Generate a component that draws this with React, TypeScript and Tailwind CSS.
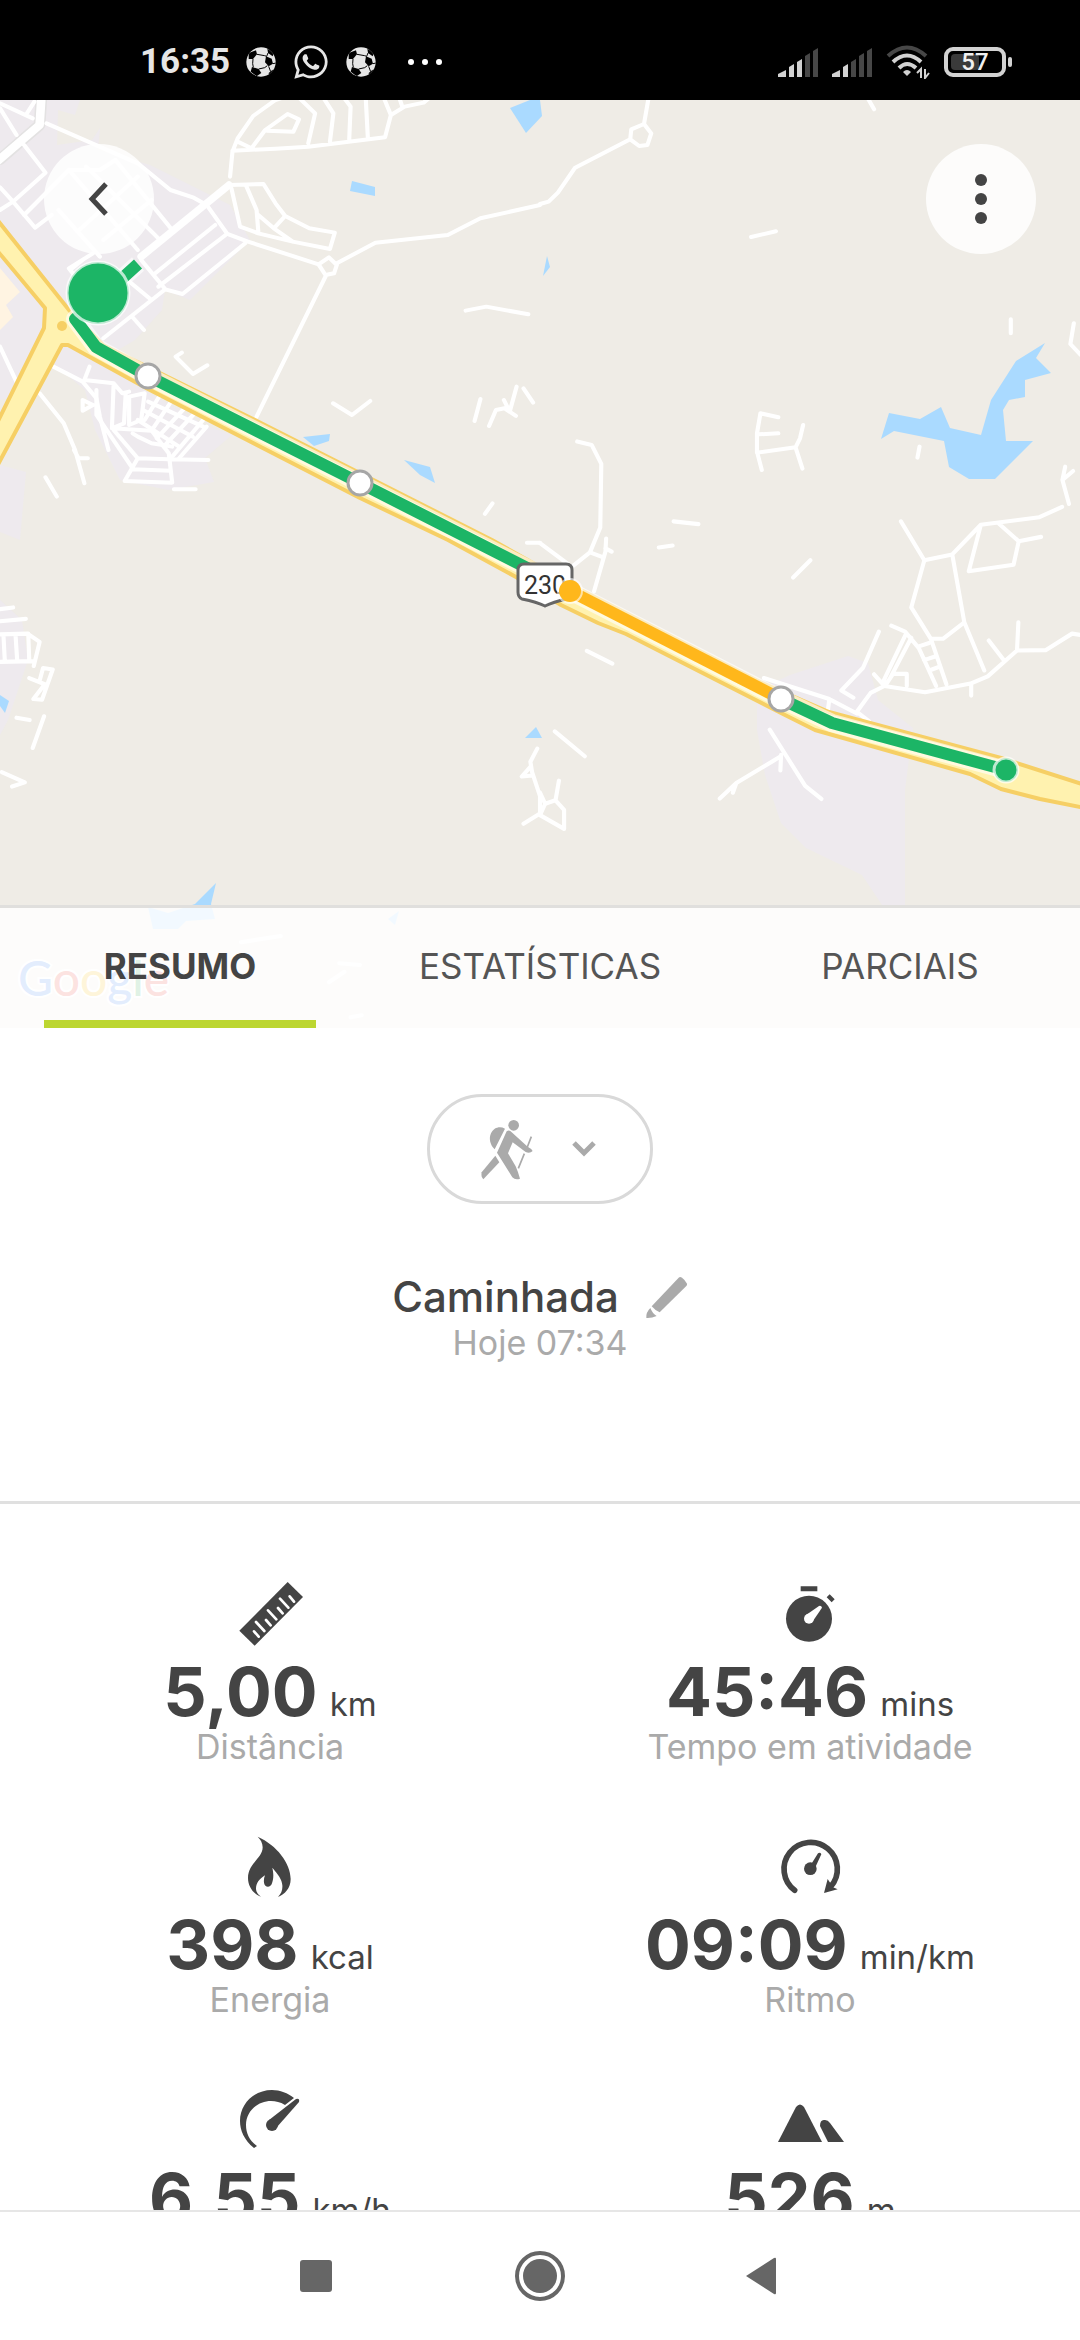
import { useState } from "react";
import type { ReactNode } from "react";
import { FaWhatsapp } from "react-icons/fa";

const SoccerBall = () => (
  <svg viewBox="0 0 90 90" className="size-[30px]" aria-hidden="true">
    <clipPath id="ball">
      <circle cx="45" cy="45" r="44" />
    </clipPath>
    <g clipPath="url(#ball)">
      <rect width="90" height="90" fill="#e6e6e6" />
      <g fill="#000">
        <path d="M8 18 L30 10 L33 22 L21 36 L8 36Z" />
        <path d="M60 28 L77 35 L81 50 L68 58 L57 46Z" />
        <path d="M18 60 L38 66 L46 78 L32 88 L14 74Z" />
        <path d="M64 4 L84 18 L80 28 L66 18Z" />
        <path d="M68 78 L80 68 L84 78 L70 90Z" />
      </g>
      <path
        d="M33 22 L56 26 L62 28 L66 18 M21 36 L20 50 L22 61 M38 66 L56 62 L64 56 M81 50 L90 48 M68 58 L74 74"
        stroke="#000"
        strokeWidth="3"
        fill="none"
      />
    </g>
  </svg>
);

const SignalBars = ({ level }: { level: number }) => {
  const bars = [
    "M0 29 V26 L8 22 V29Z",
    "M11 29 V19 L16 16 V29Z",
    "M19 29 V14 L24 11 V29Z",
    "M27 29 V8 L32 5 V29Z",
    "M35 29 V3 L40 0 V29Z",
  ];

  return (
    <svg viewBox="0 0 40 29" className="h-[29px] w-10" aria-hidden="true">
      {bars.map((d, i) => (
        <path key={d} d={d} fill={i < level ? "#d2d2d2" : "#474747"} />
      ))}
    </svg>
  );
};

const StatusBar = () => (
  <header className="flex h-[100px] shrink-0 items-end justify-between bg-black pr-[68px] pb-[18px] pl-[140px]">
    <div className="flex h-10 items-center gap-4 text-[#e6e6e6]">
      <span className="font-[Roboto] text-[35px] font-bold leading-10">16:35</span>
      <SoccerBall />
      <FaWhatsapp size={38} />
      <SoccerBall />
      <svg viewBox="0 0 34 6" className="ml-4 h-[6px] w-[34px]" aria-hidden="true" fill="#fff">
        <circle cx="3" cy="3" r="3" />
        <circle cx="17" cy="3" r="3" />
        <circle cx="31" cy="3" r="3" />
      </svg>
    </div>

    <div className="flex h-10 items-center gap-[14px]">
      <SignalBars level={3} />
      <SignalBars level={2} />
      <svg viewBox="0 0 44 34" className="h-[34px] w-11" aria-hidden="true" fill="none" strokeWidth="4">
        <path d="M2 11 Q21 -6 40 11" stroke="#474747" />
        <path d="M7 17 Q21 4 35 17" stroke="#d2d2d2" />
        <path d="M13 23 Q21 15 30 23" stroke="#d2d2d2" />
        <path d="M17 27 Q21 23 25 27 L21 31Z" fill="#d2d2d2" />
        <path d="M35 33 V24 L31 28 M39 24 V33 L43 28" stroke="#d2d2d2" strokeWidth="2" />
      </svg>
      <div className="flex items-center gap-[2px]">
        <div className="relative flex h-[30px] w-[62px] items-center justify-center rounded-[9px] border-4 border-[#d2d2d2]">
          <span className="absolute inset-y-[3px] left-[3px] w-7 rounded-sm bg-[#3a3a3a]" />
          <span className="relative font-[Roboto] text-[24px] font-medium leading-6 text-[#f0f0f0]">57</span>
        </div>
        <span className="h-[10px] w-1 rounded-sm bg-[#d2d2d2]" />
      </div>
    </div>
  </header>
);

const RouteMap = () => (
  <svg viewBox="0 100 1080 928" className="block w-full" role="img" aria-label="Mapa do percurso">
    <rect y="100" width="1080" height="928" fill="#efece6" />

    {/* urban areas */}
    <g fill="#eeeaee">
      <path d="M0 100 H80 L75 115 L58 110 L57 145 L92 140 L100 128 L98 150 L150 165 L230 205 L250 240 L190 300 L165 290 L162 310 L135 340 L118 350 L110 370 L205 425 L232 435 L205 458 L214 482 L168 490 L120 480 L95 430 L85 390 L55 365 L20 395 L0 400Z" />
      <path d="M0 465 L26 472 L20 540 L0 532Z" />
      <path d="M0 600 L22 620 L28 660 L8 720 L0 735Z" />
      <path d="M757 690 L790 675 L848 656 L868 663 L878 700 L913 728 L905 790 V905 H882 L862 875 L806 848 L781 823 L765 775 L757 730Z" />
    </g>
    <path d="M0 268 L20 292 L6 305 L13 317 L0 330Z" fill="#fff4e2" />

    {/* lakes */}
    <g fill="#aadaff">
      <path d="M510 108 L530 100 H540 L542 116 L526 133Z" />
      <path d="M352 181 L375 187 V196 L350 191Z" />
      <path d="M547 256 L550 267 L543 276Z" />
      <path d="M303 437 L330 434 L329 441 L314 446Z" />
      <path d="M404 460 L430 467 L435 483 L420 475Z" />
      <path d="M1045 343 L1036 358 L1051 373 L1025 380 V397 L1009 400 L1003 410 L1006 441 H1033 L995 479 H969 L949 467 L944 441 L894 431 L881 439 L889 413 L920 419 L941 407 L950 428 L981 435 L991 400 L1016 361Z" />
      <path d="M0 695 L9 701 L5 713 L0 706Z" />
      <path d="M525 738 L536 727 L542 738Z" />
      <path d="M148 907 L168 913 L195 904 L216 883 L211 904 L215 919 L186 921 L178 929 H153Z" />
      <path d="M388 919 L399 911 L395 925Z" />
    </g>

    {/* local streets, north-west */}
    <g
      transform="translate(0 100) scale(0.3444 0.3333)"
      fill="none"
      stroke="#fff"
      strokeWidth="12"
      strokeLinecap="round"
      strokeLinejoin="round"
    >
      <path d="M120 -5 L115 75 L0 178" strokeWidth="34" stroke="#e3e2e2" />
      <path d="M120 -5 L115 75 L-10 186" strokeWidth="25" />
      <path d="M0 10 L95 55 M75 45 L100 5 M0 25 L48 105 M135 70 L400 190 L495 270 L560 292 L600 315 L660 402 L720 425 L925 493" />
      <path d="M70 135 L132 218 L38 305 M0 330 L38 305 M0 262 L38 305 L102 383 L150 345 M70 345 L200 210 L290 210 L335 180" />
      <path d="M335 180 L500 390 M200 210 L400 450 M250 200 L460 415 M170 330 L290 470 M225 395 L400 230 M300 420 L440 300" />
      <path d="M410 470 L665 255" strokeWidth="22" />
      <path d="M665 255 L765 252 L800 310 L828 348 L898 385 L972 398 L958 447 L850 425 L750 400 L697 380 L672 265 M715 258 L745 330 L750 395 M828 348 L795 385 M750 345 L795 385 L850 425" />
      <path d="M410 480 L480 568 L530 582 L712 430 M480 568 L300 715 M448 522 L625 375 M460 560 L655 405 M370 540 L440 600 M385 652 L418 690 M270 460 L200 505 L215 525 M240 480 L210 505" />
      <path d="M668 230 L675 155 L690 115 L735 48 L800 0 L815 -5 M675 152 L800 146 L895 140 L1118 112 L1135 45 L1175 20 L1230 8 L1245 -5 M690 125 L730 145 L770 90 L835 42 L868 58 L852 95 L775 92 M870 -5 L915 40 L895 130 M940 -5 L968 40 L958 125 M1000 -5 L1018 20 L1014 118 M1062 -5 L1068 112 M1115 -5 L1135 45 M1160 -5 L1168 20" />
      <path d="M925 493 L955 472 L978 495 L970 520 L945 525 L925 493 M978 490 L1090 428 L1300 405 L1395 355 L1568 315 M945 530 L745 950" />
      <path d="M1352 632 L1412 620 L1534 643 M528 758 L510 770 L560 822 L602 796 M967 910 L1022 945 L1075 903 M1395 897 L1378 963 M1420 978 L1440 930 L1465 925 L1498 948 M1463 900 L1480 935 L1500 860 M1520 865 L1548 908" />
      <path d="M1430 1210 L1408 1242 M132 1132 L165 1190 M0 740 L50 850 L115 880 L185 970 L218 1050 L245 1150 M215 1050 L228 1075 L255 1075 M155 800 L240 845 L280 895 L290 950 L315 1050" />
      <path d="M260 800 L245 840 L330 850 L355 880 L375 875 M240 900 L240 932 L270 915Z M280 870 L280 945 L385 1105 M330 850 L325 985 L440 992 L490 1060 L500 1148 L362 1143 L400 1075 L490 1078 M325 985 L360 970 L365 880 M375 975 L375 890 L420 880 L410 960 L375 975 M330 990 L400 1075 M385 1108 L495 1112 M505 1168 H568 M490 1078 L605 1080" />
      <path d="M440 992 L500 900 M420 960 L465 885 M455 1015 L540 920 M475 1040 L565 940 M500 1070 L590 960 M520 1075 L600 980 M430 905 L590 980 M415 930 L560 1010 M400 960 L520 1040 M385 1000 L400 1010 L440 1030 L500 1040" />
    </g>

    {/* local streets, north-east */}
    <g
      transform="translate(540 100) scale(0.3444 0.3333)"
      fill="none"
      stroke="#fff"
      strokeWidth="12"
      strokeLinecap="round"
      strokeLinejoin="round"
    >
      <path d="M315 -5 L302 72 L323 100 L312 135 L288 138 L262 118 L265 88 L302 72 M262 118 L102 203 L52 278 L25 305 L0 312 M952 -5 L970 28" />
      <path d="M613 411 L685 394 M1367 658 V700 M1550 670 L1540 732 L1570 765 M1102 1040 L1096 1073" />
      <path d="M692 952 L640 940 L630 1000 L630 1055 L644 1110 M635 1003 L692 1000 M630 1058 L742 1042 L762 1106 M742 1042 L755 1015 L764 975" />
      <path d="M1525 1100 L1517 1140 L1536 1212 M1517 1140 L1548 1113" />
    </g>

    {/* local streets, south */}
    <g
      transform="translate(540 500) scale(0.3444)"
      fill="none"
      stroke="#fff"
      strokeWidth="12"
      strokeLinecap="round"
      strokeLinejoin="round"
    >
      <path d="M108 -170 L150 -160 L178 -105 L175 80 L145 152 L95 192 M145 152 L180 165 M192 112 L190 150 L157 265 M190 140 L208 150 M0 125 L80 185 M388 62 L460 70 M345 138 L385 132 M785 175 L735 225 M136 438 L210 475 M43 672 L130 744" />
      <path d="M1048 62 L1116 175 L1197 158 L1280 72 L1450 50 L1516 20 M1116 175 L1078 312 L1135 403 L1170 403 L1232 355 L1197 158 M1280 72 L1245 207 L1375 188 L1390 120 L1332 68 M1390 120 L1455 107 M1232 355 L1290 495" />
      <path d="M1020 365 L1060 382 L1100 430 L1150 540 M1135 403 L1180 535 M1100 425 L1130 415 M1115 465 L1145 455 M1130 495 L1158 485 M1062 390 L995 530 M1078 400 L1015 520 M970 506 L1000 540 L1118 558 L1250 533 L1300 512 L1385 437 L1468 436 L1545 388 L1570 392 M1385 437 L1389 355 M1347 465 L1303 408 M1252 533 V568 M1005 535 L1025 505 H1065 V540" />
      <path d="M984 382 L938 487 L875 553 L910 574 M1000 540 L960 560 L920 615 L955 642 M650 517 L840 578 L920 620 M840 578 L835 620 M667 667 L770 830 L817 868 M700 740 L698 785 M698 745 L570 822 L522 867 M570 822 L560 850" />
      <path d="M20 218 L-12 245 M0 850 L15 882 L45 872 L70 900 V955 L0 915 L15 882 M45 872 L55 815" />
    </g>
    <g
      transform="translate(0 500) scale(0.3444)"
      fill="none"
      stroke="#fff"
      strokeWidth="12"
      strokeLinecap="round"
      strokeLinejoin="round"
    >
      <path d="M1530 124 H1568 M1560 722 L1540 760 L1545 790 L1568 860 L1568 910 L1520 940 M1540 775 L1515 803 L1545 800" />
      <path d="M0 317 L38 312 M0 352 L75 345 M0 390 L80 388 L115 412 L98 482 M0 470 L100 468 M10 392 L14 468 M45 390 L50 468 M82 388 L85 468 M85 517 L130 535 L97 578 L122 580 L153 492 L125 488 L115 525 M48 632 L86 639 M128 628 L95 720 M5 790 L72 820 L35 832" />
      <path d="M700 1284 L815 1266 M985 1345 L1045 1350 M1000 1370 L955 1400 M1018 1502 L1050 1496" />
    </g>

    {/* highway */}
    <path
      d="M-5 217 L69 310 L103 345 L255 420 L492 540 L581 590 L760 682 L829 712 L1001 758 L1085 785 V808 L1040 799 L1001 789 L970 774 L815 730 L781 713 L626 634 L598 623 L561 605 L516 577 L448 540 L360 498 L148 389 L68 345 L62 345 L-5 470 V427 L44 328 L45 308 L-5 248Z"
      fill="#fff2af"
      stroke="#f6cf65"
      strokeWidth="4"
      strokeLinejoin="round"
    />
    <circle cx="62" cy="326" r="5" fill="#f6cf65" />

    {/* recorded route */}
    <g fill="none" strokeLinejoin="round">
      <path d="M138 264 L116 284 L75 319 L96 347 L148 376 L360 483 L545 577" stroke="#fff" strokeOpacity="0.6" strokeWidth="18" />
      <path d="M570 591 L781 699 L832 723 L1006 770" stroke="#fff" strokeOpacity="0.6" strokeWidth="18" />
      <path d="M138 264 L116 284 L75 319 L96 347 L148 376 L360 483 L545 577" stroke="#1cb566" strokeWidth="12" />
      <path d="M781 699 L832 723 L1006 770" stroke="#1cb566" strokeWidth="12" />
      <path d="M570 591 L781 699" stroke="#ffb71b" strokeWidth="12" />
    </g>
    <circle cx="98" cy="293" r="31" fill="#1cb566" stroke="#fff" strokeOpacity="0.7" strokeWidth="3" />

    <path
      d="M524 564 H566 Q572 564 572 570 V592 Q572 597 567 599 Q553 602 545 606 Q537 602 522 599 Q518 597 518 592 V570 Q518 564 524 564Z"
      fill="#fff"
      stroke="#666"
      strokeWidth="3"
    />
    <text x="545" y="594" textAnchor="middle" className="font-[Roboto] text-[25px]" fill="#333">
      230
    </text>

    <circle cx="570" cy="591" r="13" fill="#fff" fillOpacity="0.6" />
    <circle cx="570" cy="591" r="11" fill="#ffb71b" />
    <circle cx="1006" cy="770" r="12" fill="#1cb566" stroke="#fff" strokeOpacity="0.7" strokeWidth="3" />
    <g fill="#fff" stroke="#a6a6a6" strokeWidth="3">
      <circle cx="148" cy="376" r="12" />
      <circle cx="360" cy="483" r="12" />
      <circle cx="781" cy="699" r="12" />
    </g>

    <text
      x="18"
      y="996"
      className="font-[Lato] text-[48px] font-medium"
      stroke="#fff"
      strokeWidth="4"
      paintOrder="stroke"
    >
      <tspan fill="#4285f4">G</tspan>
      <tspan fill="#ea4335">o</tspan>
      <tspan fill="#fbbc05">o</tspan>
      <tspan fill="#4285f4">g</tspan>
      <tspan fill="#34a853">l</tspan>
      <tspan fill="#ea4335">e</tspan>
    </text>
  </svg>
);

const tabs = ["RESUMO", "ESTATÍSTICAS", "PARCIAIS"];

const Tabs = () => {
  const [active, setActive] = useState("RESUMO");

  return (
    <div
      role="tablist"
      className="absolute inset-x-0 bottom-0 grid grid-cols-3 border-t-[3px] border-[#e0dfdd] bg-white/85"
    >
      {tabs.map((tab) => (
        <button
          key={tab}
          role="tab"
          aria-selected={active === tab}
          onClick={() => setActive(tab)}
          className={
            active === tab
              ? "px-11 text-[35px] font-bold leading-10 text-[#444]"
              : "px-11 text-[35px] leading-10 text-[#555]"
          }
        >
          <span className="block pt-[38px] pb-[34px]">{tab}</span>
          <span className={active === tab ? "block h-2 bg-[#bcd631]" : "block h-2"} />
        </button>
      ))}
    </div>
  );
};

type StatProps = {
  icon: ReactNode;
  value: string;
  unit: string;
  label: string;
};

const Stat = ({ icon, value, unit, label }: StatProps) => (
  <div className="flex flex-col items-center">
    {icon}
    <p className="mt-[5px] flex items-baseline gap-3 whitespace-nowrap text-[#444]">
      <span className="text-[68px] font-bold leading-[72px]">{value}</span>
      <span className="text-[33px] leading-10">{unit}</span>
    </p>
    <p className="text-[34px] leading-10 text-[#aaa]">{label}</p>
  </div>
);

const stats: StatProps[] = [
  {
    value: "5,00",
    unit: "km",
    label: "Distância",
    icon: (
      <svg viewBox="342 54 216 216" className="size-[72px]" aria-hidden="true">
        <path d="M503 66 L549 111 L404 257 L358 212Z" fill="#444" />
        <path
          d="M402 214 L416 230 M408 186 L433 213 M438 180 L452 196 M444 151 L469 178 M474 144 L488 160 M480 116 L505 143 M509 109 L522 125"
          stroke="#fff"
          strokeWidth="8"
          strokeLinecap="round"
        />
      </svg>
    ),
  },
  {
    value: "45:46",
    unit: "mins",
    label: "Tempo em atividade",
    icon: (
      <svg viewBox="522 54 216 216" className="size-[72px]" aria-hidden="true">
        <circle cx="627" cy="176" r="69" fill="#444" />
        <path d="M602 79 H652 V94 H602Z M689 103 L704 118 L695 127 L680 112Z" fill="#444" />
        <circle cx="627" cy="176" r="15" fill="#fff" />
        <path d="M617 166 L657 138 Q664 136 666 143 L641 180Z" fill="#fff" />
      </svg>
    ),
  },
  {
    value: "398",
    unit: "kcal",
    label: "Energia",
    icon: (
      <svg viewBox="342 63 216 216" className="size-[72px]" aria-hidden="true">
        <path
          d="M413 80 C470 105 512 160 512 207 C512 235 495 252 474 261 C484 250 488 240 487 226 C486 208 474 193 457 173 C462 195 460 208 456 220 C452 234 434 234 432 218 C431 210 432 203 435 196 C417 207 408 220 408 235 C408 248 416 255 424 261 C400 252 384 230 384 204 C384 160 428 145 428 112 C428 98 421 88 413 80Z"
          fill="#444"
        />
      </svg>
    ),
  },
  {
    value: "09:09",
    unit: "min/km",
    label: "Ritmo",
    icon: (
      <svg viewBox="522 63 216 216" className="size-[72px]" aria-hidden="true">
        <path
          d="M584 241 A80 80 0 1 1 692 230"
          fill="none"
          stroke="#444"
          strokeWidth="17"
          strokeLinecap="round"
        />
        <path d="M683 207 L672 249 L713 238 L699 232Z" fill="#444" />
        <circle cx="631" cy="176" r="19" fill="#444" />
        <path d="M632 165 L654 130 Q661 126 664 133 L646 172Z" fill="#444" />
      </svg>
    ),
  },
  {
    value: "6,55",
    unit: "km/h",
    label: "Velocidade média",
    icon: (
      <svg viewBox="0 0 72 72" className="size-[72px]" aria-hidden="true" fill="#444">
        <path d="M20 64 C10 56 6 46 6 37 C6 20 20 6 38 6 C46 6 54 9 60 14 L51 21 C46 18 42 17 37 17 C24 17 12 27 12 41 C12 50 16 57 23 62Z" />
        <path d="M35 36 L62 15 Q66 14 65 18 L43 43Z" />
        <circle cx="38" cy="41" r="6" />
      </svg>
    ),
  },
  {
    value: "526",
    unit: "m",
    label: "Altitude máxima",
    icon: (
      <svg viewBox="0 0 72 72" className="size-[72px]" aria-hidden="true" fill="#444">
        <path d="M4 58 L22 23 Q26 18 30 23 L48 58Z" />
        <path d="M54 58 L46 42 Q46 35 51 36 Q54 36 56 39 L70 58Z" />
      </svg>
    ),
  },
];

const NavBar = () => (
  <nav className="grid h-[130px] shrink-0 grid-cols-[2fr_1fr_2fr] items-center border-t-2 border-[#e6e6e6] bg-white text-[#666]">
    <button aria-label="Recentes" className="justify-self-end pr-[100px]">
      <span className="block size-8 rounded-[3px] bg-[#666]" />
    </button>
    <button aria-label="Início" className="justify-self-center">
      <svg viewBox="0 0 50 50" className="size-[50px]">
        <circle cx="25" cy="25" r="23" fill="none" stroke="#666" strokeWidth="4" />
        <circle cx="25" cy="25" r="17" fill="#666" />
      </svg>
    </button>
    <button aria-label="Voltar" className="justify-self-start pl-[97px]">
      <svg viewBox="0 0 32 38" className="h-[38px] w-8">
        <path d="M1 19 L29 1 Q31 0 31 2 V36 Q31 38 29 37Z" fill="#666" />
      </svg>
    </button>
  </nav>
);

export default function App() {
  return (
    <div className="flex h-screen flex-col bg-white font-[Inter,sans-serif]">
      <StatusBar />

      <main className="min-h-0 flex-1 overflow-hidden">
        <section className="relative">
          <RouteMap />
          <div className="absolute inset-x-11 top-11 flex justify-between">
            <button
              aria-label="Voltar"
              className="flex size-[110px] items-center justify-center rounded-full bg-white/85"
            >
              <svg viewBox="0 0 24 36" className="h-9 w-6" fill="none" stroke="#444" strokeWidth="5">
                <path d="M19 3 L5 18 L19 33" />
              </svg>
            </button>
            <button
              aria-label="Mais opções"
              className="flex size-[110px] items-center justify-center rounded-full bg-white/85"
            >
              <svg viewBox="0 0 12 50" className="h-[50px] w-3" fill="#444">
                <circle cx="6" cy="6" r="6" />
                <circle cx="6" cy="25" r="6" />
                <circle cx="6" cy="44" r="6" />
              </svg>
            </button>
          </div>
          <Tabs />
        </section>

        <section className="flex flex-col items-center border-b-[3px] border-[#e0e0e0] pt-[66px] pb-[137px]">
          <button
            aria-label="Tipo de atividade"
            className="flex h-[110px] items-center gap-[38px] rounded-full border-[3px] border-[#d9d9d9] pr-[54px] pl-[50px]"
          >
            <svg viewBox="360 171 162 189" className="h-[63px] w-[54px]" fill="#aaa">
              <circle cx="461" cy="193" r="16" />
              <path d="M404 265 C390 252 386 232 393 217 C401 199 420 194 435 203Z" />
              <path d="M440 211 Q446 207 451 210 L503 257 Q515 263 518 270 Q510 278 497 273 L458 244 L444 277 L467 316 Q474 332 480 353 Q466 358 457 349 L411 275Z" />
              <path d="M406 284 L418 304 L370 355 Q362 347 365 334Z" />
              <path d="M514 227 L502 258 M493 278 L475 322" stroke="#aaa" strokeWidth="5" />
            </svg>
            <svg viewBox="0 0 24 16" className="h-4 w-6" fill="none" stroke="#aaa" strokeWidth="5">
              <path d="M2 2 L12 12 L22 2" />
            </svg>
          </button>

          <div className="mt-[68px] flex items-center gap-[26px]">
            <h1 className="text-[42px] font-medium leading-[50px] text-[#444]">Caminhada</h1>
            <button aria-label="Editar nome">
              <svg viewBox="858 645 129 129" className="size-[43px]" fill="#aaa">
                <path d="M959 650 Q963 646 969 650 Q979 657 984 668 Q985 672 982 675 L902 754 Q888 748 878 736Z" />
                <path d="M874 741 Q880 757 893 765 Q878 772 862 771 Q860 755 874 741Z" />
              </svg>
            </button>
          </div>
          <p className="text-[34px] leading-[42px] text-[#aaa]">Hoje 07:34</p>
        </section>

        <section className="grid grid-cols-2 gap-y-16 pt-[74px]">
          {stats.map((stat) => (
            <Stat key={stat.label} {...stat} />
          ))}
        </section>
      </main>

      <NavBar />
    </div>
  );
}
